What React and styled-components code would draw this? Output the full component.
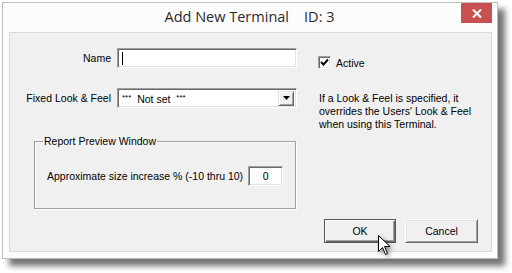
import React from "react";
import styled, { createGlobalStyle } from "styled-components";

const Global = createGlobalStyle`
  html, body { margin: 0; padding: 0; background: #ffffff; }
  body { font-family: "Liberation Sans", Arial, sans-serif; font-size: 10.5px; color: #000; }
  * { box-sizing: border-box; }
`;

const Page = styled.div`
  padding: 2px 0 0 2px;
  width: 512px;
  height: 273px;
  overflow: hidden;
`;

const Window = styled.div`
  position: relative;
  width: 496px;
  height: 257px;
  border: 1px solid #bdbdbd;
  background: #fcfcfc;
  box-shadow: 7px 7px 6px rgba(0, 0, 0, 0.55);
  display: flex;
  flex-direction: column;
  padding: 0 5px 6px 6px;
`;

const TitleBar = styled.div`
  height: 29px;
  display: flex;
  align-items: flex-start;
  position: relative;
`;

const Title = styled.div`
  flex: 1;
  text-align: center;
  white-space: pre;
  font-family: "Open Sans", "Noto Sans", sans-serif;
  font-size: 14.5px;
  line-height: 28px;
  color: #2b2b2b;
  padding-right: 2px;
`;

const CloseButton = styled.div`
  position: absolute;
  right: 0;
  top: 0;
  width: 31px;
  height: 20px;
  background: #c75050;
  display: flex;
  align-items: center;
  justify-content: center;
`;

const Client = styled.div`
  flex: 1;
  border: 1px solid #d9d9d9;
  background: #f0f0f0;
  display: grid;
  grid-template-columns: 287px 1fr;
  column-gap: 21px;
  padding: 15px 12px 8px 0;
`;

const LeftCol = styled.div`
  display: flex;
  flex-direction: column;
`;

const FieldRow = styled.div`
  display: grid;
  grid-template-columns: 101px 180px;
  column-gap: 6px;
  align-items: center;
  margin-bottom: ${(p) => p.$gap || 0}px;
`;

const Label = styled.label`
  text-align: right;
  white-space: nowrap;
`;

const Sunken = styled.div`
  position: relative;
  flex: none;
  height: ${(p) => p.$h || 20}px;
  width: ${(p) => (p.$w ? p.$w + "px" : "auto")};
  background: #fff;
  border-style: solid;
  border-width: 1px;
  border-color: #a0a0a0 #ffffff #ffffff #a0a0a0;
  box-shadow: inset 1px 1px 0 #696969, inset -1px -1px 0 #e3e3e3;
  display: flex;
  align-items: center;
  padding-left: ${(p) => p.$pl ?? 4}px;
  justify-content: ${(p) => (p.$center ? "center" : "flex-start")};
`;

const Caret = styled.span`
  width: 1px;
  height: 13px;
  background: #000;
`;

const SelectText = styled.span`
  flex: 1;
  white-space: pre;
  line-height: 13px;
`;

const Stars = styled.span`
  font-size: 8px;
  vertical-align: 3px;
`;

const DropButton = styled.div`
  width: 16px;
  height: 15px;
  margin-right: 2px;
  background: #f0f0f0;
  border-style: solid;
  border-width: 1px;
  border-color: #e3e3e3 #696969 #696969 #e3e3e3;
  box-shadow: inset 1px 1px 0 #fff, inset -1px -1px 0 #a0a0a0;
  display: flex;
  align-items: center;
  justify-content: center;
`;

const GroupBox = styled.fieldset`
  margin: 27px 0 0 24px;
  width: 262px;
  height: 74px;
  padding: 18px 0 0 12px;
  border: 1px solid #a0a0a0;
  box-shadow: 1px 1px 0 #fff, inset 1px 1px 0 #fff;
  min-inline-size: 0;
`;

const Legend = styled.legend`
  padding: 0 1px;
  margin-left: -4px;
  line-height: 13px;
`;

const GroupRow = styled.div`
  display: flex;
  align-items: center;
  gap: 5px;
  white-space: nowrap;
`;

const RightCol = styled.div`
  display: flex;
  flex-direction: column;
`;

const CheckRow = styled.div`
  display: flex;
  align-items: center;
  gap: 5px;
  margin-top: 8px;
  height: 13px;
`;

const CheckBox = styled.div`
  width: 13px;
  height: 13px;
  background: #fff;
  border-style: solid;
  border-width: 1px;
  border-color: #a0a0a0 #fff #fff #a0a0a0;
  box-shadow: inset 1px 1px 0 #696969, inset -1px -1px 0 #e3e3e3;
  display: flex;
  align-items: center;
  justify-content: center;
`;

const Info = styled.p`
  margin: 23px 0 0 1px;
  line-height: 13px;
  width: 170px;
`;

const ButtonRow = styled.div`
  margin-top: auto;
  display: flex;
  gap: 9px;
  padding-left: 6px;
  position: relative;
`;

const Button = styled.div`
  width: ${(p) => (p.$default ? 72 : 73)}px;
  height: 24px;
  background: #f0f0f0;
  display: flex;
  align-items: center;
  justify-content: center;
  ${(p) =>
    p.$default
      ? `border: 1px solid #555555;
         box-shadow: inset 1px 1px 0 #fff, inset -1px -1px 0 #696969, inset -2px -2px 0 #a0a0a0;`
      : `border-style: solid; border-width: 1px;
         border-color: #fff #696969 #696969 #fff;
         box-shadow: inset 1px 1px 0 #e3e3e3, inset -1px -1px 0 #a0a0a0;`}
`;

const Cursor = styled.svg`
  position: absolute;
  left: 60px;
  top: 16px;
  filter: drop-shadow(2px 2px 2px rgba(0, 0, 0, 0.45));
`;

export default function App() {
  return (
    <Page>
      <Global />
      <Window>
        <TitleBar>
          <Title>{"Add New Terminal    ID: 3"}</Title>
          <CloseButton>
            <svg width="10" height="9" viewBox="0 0 10 9">
              <path d="M1 0.5 L9 8.5 M9 0.5 L1 8.5" stroke="#fff" strokeWidth="2" />
            </svg>
          </CloseButton>
        </TitleBar>
        <Client>
          <LeftCol>
            <FieldRow $gap={20}>
              <Label>Name</Label>
              <Sunken $h={20}>
                <Caret />
              </Sunken>
            </FieldRow>
            <FieldRow>
              <Label>Fixed Look &amp; Feel</Label>
              <Sunken $h={20} $pl={4}>
                <SelectText>
                  <Stars>***</Stars>{"  Not set  "}<Stars>***</Stars>
                </SelectText>
                <DropButton>
                  <svg width="7" height="4" viewBox="0 0 7 4">
                    <path d="M0 0 H7 L3.5 4 Z" fill="#000" />
                  </svg>
                </DropButton>
              </Sunken>
            </FieldRow>
            <GroupBox>
              <Legend>Report Preview Window</Legend>
              <GroupRow>
                <span>Approximate size increase % (-10 thru 10)</span>
                <Sunken $h={20} $w={35} $pl={0} $center>0</Sunken>
              </GroupRow>
            </GroupBox>
          </LeftCol>
          <RightCol>
            <CheckRow>
              <CheckBox>
                <svg width="9" height="9" viewBox="0 0 9 9">
                  <path d="M1 4 L3.5 6.5 L8 1.5" stroke="#000" strokeWidth="2" fill="none" />
                </svg>
              </CheckBox>
              <span>Active</span>
            </CheckRow>
            <Info>
              If a Look &amp; Feel is specified, it overrides the Users' Look &amp; Feel when
              using this Terminal.
            </Info>
            <ButtonRow>
              <Button $default>OK</Button>
              <Button>Cancel</Button>
              <Cursor width="13" height="20" viewBox="0 0 13 20">
                <path
                  d="M0.5 0.5 V16.5 L4.5 12.5 L7.5 19.5 L9.5 18.5 L6.5 11.5 H12 Z"
                  fill="#fff"
                  stroke="#000"
                  strokeWidth="1"
                />
              </Cursor>
            </ButtonRow>
          </RightCol>
        </Client>
      </Window>
    </Page>
  );
}
